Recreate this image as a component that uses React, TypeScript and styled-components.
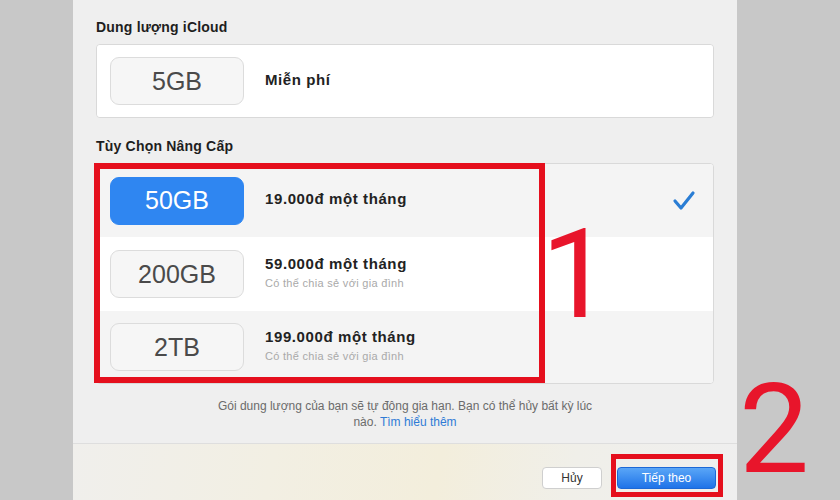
import React from "react";
import styled, { createGlobalStyle } from "styled-components";

const Global = createGlobalStyle`
  html, body { margin: 0; padding: 0; }
  body { background: #c9c9c9; font-family: "Liberation Sans", Arial, sans-serif; }
`;

const Page = styled.div`
  position: relative;
  width: 840px;
  height: 500px;
  overflow: hidden;
  display: flex;
  background: #c9c9c9;
`;

const Side = styled.div<{ $w: number }>`
  width: ${(p) => p.$w}px;
  flex: none;
  background: #c8c8c8;
`;

const Dialog = styled.div`
  width: 664px;
  flex: none;
  background: #efefef;
  display: flex;
  flex-direction: column;
  box-shadow: 1px 0 0 #d6d6d6;
`;

const Body = styled.div`
  padding: 18px 23px 0 23px;
  display: flex;
  flex-direction: column;
`;

const SectionTitle = styled.div<{ $mt?: number }>`
  font-size: 14px;
  font-weight: 700;
  line-height: 18px;
  letter-spacing: 0.2px;
  color: #1e1e1e;
  margin-top: ${(p) => p.$mt ?? 0}px;
`;

const Card = styled.div`
  margin-top: 8px;
  background: #fff;
  border: 1px solid #d9d9d9;
  border-radius: 4px;
  overflow: hidden;
`;

const Row = styled.div<{ $bg: string; $h: number }>`
  height: ${(p) => p.$h}px;
  background: ${(p) => p.$bg};
  display: flex;
  align-items: center;
  padding: 0 17px 0 13px;
`;

const Pill = styled.div<{ $active?: boolean }>`
  width: 134px;
  height: 48px;
  box-sizing: border-box;
  border-radius: 9px;
  border: 1px solid ${(p) => (p.$active ? "#2f86f1" : "#dcdcdc")};
  background: ${(p) => (p.$active ? "#2f86f1" : "#f6f6f6")};
  color: ${(p) => (p.$active ? "#ffffff" : "#4a4a4a")};
  font-size: 25px;
  display: flex;
  align-items: center;
  justify-content: center;
  flex: none;
`;

const Info = styled.div`
  margin-left: 21px;
  display: flex;
  flex-direction: column;
  flex: 1;
  padding-bottom: 3px;
`;

const Price = styled.div`
  font-size: 15px;
  font-weight: 700;
  letter-spacing: 0.6px;
  color: #222;
  line-height: 18px;
`;

const Sub = styled.div`
  font-size: 11px;
  letter-spacing: 0.3px;
  color: #a9a9a9;
  line-height: 14px;
  margin-top: 3px;
`;

const Note = styled.div`
  margin: 14px auto 0;
  width: 400px;
  text-align: center;
  font-size: 12px;
  line-height: 16px;
  color: #6b6b6b;
`;

const Link = styled.span`
  color: #2e7bd6;
`;

const Footer = styled.div`
  margin-top: 13px;
  border-top: 1px solid #dedede;
  flex: 1;
  background: linear-gradient(100deg, #f0efec 0%, #f2efe3 30%, #f3eedc 55%, #f0efe9 75%, #efefef 100%);
  display: flex;
  justify-content: flex-end;
  align-items: flex-start;
  padding: 23px 21px 0 0;
  gap: 15px;
`;

const Button = styled.div<{ $primary?: boolean; $w: number }>`
  width: ${(p) => p.$w}px;
  height: 22px;
  box-sizing: border-box;
  border-radius: 4px;
  font-size: 12px;
  display: flex;
  align-items: center;
  justify-content: center;
  color: ${(p) => (p.$primary ? "#fff" : "#333")};
  background: ${(p) =>
    p.$primary ? "linear-gradient(#5aa6f7, #1f73e8)" : "#ffffff"};
  border: 1px solid ${(p) => (p.$primary ? "#1c68d6" : "#cfcfcf")};
`;

const RedBox = styled.div<{ $x: number; $y: number; $w: number; $h: number; $b: number }>`
  position: absolute;
  left: ${(p) => p.$x}px;
  top: ${(p) => p.$y}px;
  width: ${(p) => p.$w}px;
  height: ${(p) => p.$h}px;
  box-sizing: border-box;
  border: ${(p) => p.$b}px solid #e50f1d;
  pointer-events: none;
`;

const Num = styled.div<{ $x: number; $y: number }>`
  position: absolute;
  left: ${(p) => p.$x}px;
  top: ${(p) => p.$y}px;
  font-family: Roboto, "Liberation Sans", sans-serif;
  font-size: 125px;
  line-height: 1;
  color: #e8152b;
`;

const Check = () => (
  <svg width="24" height="24" viewBox="0 0 24 24">
    <polyline
      points="3,12 9,19 21,4"
      fill="none"
      stroke="#2a7dd4"
      strokeWidth="3.2"
      strokeLinecap="round"
      strokeLinejoin="round"
    />
  </svg>
);

export default function App() {
  return (
    <>
      <Global />
      <Page>
        <Side $w={73} />
        <Dialog>
          <Body>
            <SectionTitle>Dung lượng iCloud</SectionTitle>
            <Card>
              <Row $bg="#ffffff" $h={72}>
                <Pill>5GB</Pill>
                <Info>
                  <Price>Miễn phí</Price>
                </Info>
              </Row>
            </Card>
            <SectionTitle $mt={19}>Tùy Chọn Nâng Cấp</SectionTitle>
            <Card>
              <Row $bg="#f4f4f4" $h={73}>
                <Pill $active>50GB</Pill>
                <Info>
                  <Price>19.000đ một tháng</Price>
                </Info>
                <Check />
              </Row>
              <Row $bg="#ffffff" $h={74}>
                <Pill>200GB</Pill>
                <Info>
                  <Price>59.000đ một tháng</Price>
                  <Sub>Có thể chia sẻ với gia đình</Sub>
                </Info>
              </Row>
              <Row $bg="#f4f4f4" $h={72}>
                <Pill>2TB</Pill>
                <Info>
                  <Price>199.000đ một tháng</Price>
                  <Sub>Có thể chia sẻ với gia đình</Sub>
                </Info>
              </Row>
            </Card>
            <Note>
              Gói dung lượng của bạn sẽ tự động gia hạn. Bạn có thể hủy bất kỳ lúc
              nào. <Link>Tìm hiểu thêm</Link>
            </Note>
          </Body>
          <Footer>
            <Button $w={60}>Hủy</Button>
            <Button $primary $w={99}>Tiếp theo</Button>
          </Footer>
        </Dialog>
        <Side $w={103} />
        <RedBox $x={94} $y={163} $w={451} $h={220} $b={6} />
        <RedBox $x={611} $y={454} $w={112} $h={43} $b={5} />
        <Num $x={541} $y={212}>1</Num>
        <Num $x={739} $y={367}>2</Num>
      </Page>
    </>
  );
}
